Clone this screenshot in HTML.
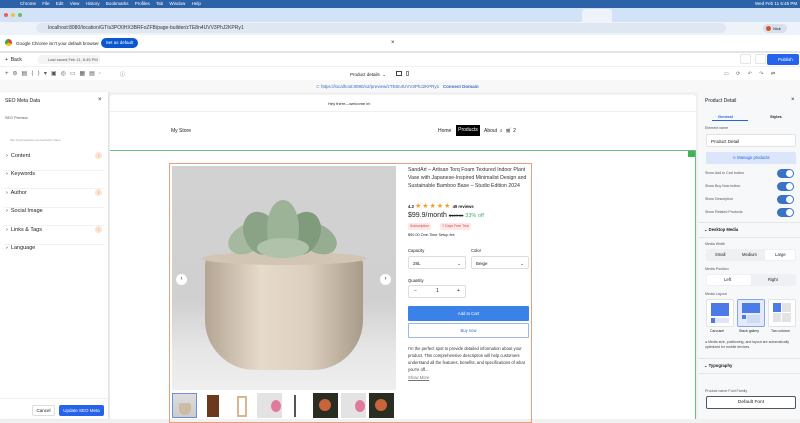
<!DOCTYPE html>
<html><head><meta charset="utf-8"><style>
*{box-sizing:border-box;margin:0;padding:0}
body{width:800px;height:419px;overflow:hidden;font-family:"Liberation Sans",sans-serif;background:#f1f1f1;position:relative;color:#222}
.a{position:absolute}
.t{font-size:5px;white-space:nowrap}
.sw{position:absolute;width:17px;height:9px;border-radius:5px;background:#3a73c4}
.sw:after{content:"";position:absolute;right:1px;top:1px;width:7px;height:7px;border-radius:50%;background:#fff}
.acc{position:absolute;left:4px;width:100px;height:27px;border-bottom:1px solid #f2f2f2;font-size:5.5px;padding:9px 0 0 2px}
.badge{position:absolute;right:2px;top:8px;width:7px;height:7px;border-radius:50%;background:#fbe3cf;color:#d88a3a;font-size:4px;text-align:center;line-height:7px}
.th{position:absolute;top:393px;width:25px;height:25px}
.lf{position:absolute;border-radius:50% 50% 45% 45%}
</style></head><body>
<div class="a" style="left:0;top:0;width:800px;height:8px;background:#2c63a8"></div>
<div class="a t" style="left:20px;top:1px;color:#fff;font-size:4.5px;word-spacing:5px">Chrome File Edit View History Bookmarks Profiles Tab Window Help</div>
<div class="a t" style="left:755px;top:1px;color:#fff;font-size:4.5px">Wed Feb 11 6:45 PM</div>
<div class="a" style="left:0;top:8px;width:800px;height:14px;background:#d3e3f7"></div>
<div class="a" style="left:4px;top:13px;width:4px;height:4px;border-radius:50%;background:#ee5d52"></div>
<div class="a" style="left:11px;top:13px;width:4px;height:4px;border-radius:50%;background:#f5bd4f"></div>
<div class="a" style="left:18px;top:13px;width:4px;height:4px;border-radius:50%;background:#5fc454"></div>
<div class="a" style="left:582px;top:9px;width:30px;height:13px;background:#eef3fa;border-radius:3px 3px 0 0"></div>
<div class="a" style="left:0;top:22px;width:800px;height:13px;background:#eef3fa"></div>
<div class="a" style="left:36px;top:23px;width:690px;height:10px;background:#dfe7f3;border-radius:5px"></div>
<div class="a t" style="left:48px;top:25px;font-size:5px;color:#333">localhost:8080/location/GTIs3PO0HX3BRFoZFB/page-builder/zTE8n4UVV3PhJ2KPRy1</div>
<div class="a" style="left:763px;top:24px;width:24px;height:9px;background:#d6e0ee;border-radius:5px"></div>
<div class="a" style="left:766px;top:26px;width:5px;height:5px;border-radius:50%;background:#d9531e"></div>
<div class="a t" style="left:773px;top:26px;font-size:4px">Nick</div>
<div class="a" style="left:0;top:35px;width:800px;height:16px;background:#fff"></div>
<div class="a" style="left:5px;top:39px;width:7px;height:7px;border-radius:50%;background:conic-gradient(#e94235 0 33%,#fbbc04 0 66%,#34a853 0)"></div>
<div class="a t" style="left:16px;top:41px;font-size:4.5px">Google Chrome isn't your default browser</div>
<div class="a" style="left:101px;top:38px;width:37px;height:10px;background:#0b57d0;border-radius:5px;color:#fff;font-size:4.5px;text-align:center;line-height:10px">Set as default</div>
<div class="a t" style="left:391px;top:40px;font-size:6px">×</div>
<div class="a" style="left:0;top:51px;width:800px;height:2px;background:#e4e4e4"></div>
<div class="a" style="left:0;top:53px;width:800px;height:27px;background:#fff"></div>
<div class="a t" style="left:5px;top:57px;font-size:5px">+&nbsp;&nbsp;Back</div>
<div class="a" style="left:38px;top:55px;width:62px;height:9px;background:#f4f4f4;border-radius:3px"></div>
<div class="a t" style="left:48px;top:57px;font-size:4px;color:#555">Last saved Feb 11, 6:45 PM</div>
<div class="a" style="left:740px;top:54px;width:11px;height:10px;border:1px solid #e5e5e5;border-radius:2px"></div>
<div class="a" style="left:755px;top:54px;width:11px;height:10px;border:1px solid #e5e5e5;border-radius:2px"></div>
<div class="a" style="left:767px;top:54px;width:32px;height:11px;background:#2563eb;border-radius:2px;color:#fff;font-size:4.5px;line-height:11px;padding-left:11px">Publish</div>
<div class="a" style="left:0;top:66px;width:800px;height:1px;background:#f0f0f0"></div>
<div class="a t" style="left:5px;top:70px;font-size:6px;color:#555;letter-spacing:4px">+⊜▤⟨⟩▾▣◎▭▦▤◦</div>
<div class="a t" style="left:120px;top:71px;font-size:5px;color:#555">ⓘ</div>
<div class="a t" style="left:350px;top:72px;font-size:4.5px">Product details &nbsp;⌄</div>
<div class="a" style="left:396px;top:71px;width:6px;height:5px;border:1px solid #444"></div>
<div class="a" style="left:406px;top:71px;width:3px;height:5px;border:1px solid #888"></div>
<div class="a t" style="left:724px;top:71px;font-size:5px;color:#666;word-spacing:6px">▭ ⟳ ↶ ↷ ⇄</div>
<div class="a" style="left:0;top:80px;width:800px;height:12px;background:#f8f8f8"></div>
<div class="a t" style="left:316px;top:84px;font-size:4.5px;color:#3a6bc9">⊂ https://localhost:8080/v2/preview/zTE8n4UVV3PhJ2KPRy1 &nbsp;&nbsp;<b>Connect Domain</b></div>
<div class="a" style="left:0;top:92px;width:108px;height:327px;background:#fff;box-shadow:1px 0 2px rgba(0,0,0,.08)"></div>
<div class="a t" style="left:5px;top:98px;font-size:5px">SEO Meta Data</div>
<div class="a t" style="left:98px;top:97px;font-size:6px">×</div>
<div class="a t" style="left:5px;top:116px;font-size:3.8px;color:#555">SEO Preview</div>
<div class="a t" style="left:10px;top:138px;font-size:3px;color:#999">http://yourwebsite.com/social-for-them</div>
<div class="acc" style="top:144px">›&nbsp; Content<span class="badge">!</span></div>
<div class="acc" style="top:162px">›&nbsp; Keywords</div>
<div class="acc" style="top:181px">›&nbsp; Author<span class="badge">!</span></div>
<div class="acc" style="top:199px">›&nbsp; Social Image</div>
<div class="acc" style="top:218px">›&nbsp; Links &amp; Tags<span class="badge">!</span></div>
<div class="acc" style="top:236px;border:none">›&nbsp; Language</div>
<div class="a" style="left:0;top:398px;width:108px;height:1px;background:#eee"></div>
<div class="a" style="left:32px;top:405px;width:23px;height:11px;border:1px solid #ddd;border-radius:2px;font-size:4.5px;text-align:center;line-height:9px">Cancel</div>
<div class="a" style="left:59px;top:405px;width:45px;height:11px;background:#2563eb;border-radius:2px;color:#fff;font-size:4.5px;text-align:center;line-height:11px">Update SEO Meta</div>
<div class="a" style="left:110px;top:95px;width:586px;height:324px;background:#fff;border-radius:3px"></div>
<div class="a" style="left:110px;top:111px;width:586px;height:1px;background:#eee"></div>
<div class="a t" style="left:328px;top:101px;font-size:4px">Hey there—welcome in!</div>
<div class="a t" style="left:171px;top:128px;font-size:5px">My Store</div>
<div class="a t" style="left:438px;top:128px;font-size:5px">Home</div>
<div class="a" style="left:456px;top:125px;width:24px;height:11px;background:#000;color:#fff;font-size:5px;line-height:11px;text-align:center">Products</div>
<div class="a t" style="left:484px;top:128px;font-size:5px">About &nbsp;⌕ &nbsp;🛒︎ 2</div>
<div class="a" style="left:110px;top:150px;width:586px;height:269px;border-top:1px solid #6cbf7b;border-right:1px solid #6cbf7b"></div>
<div class="a" style="left:688px;top:151px;width:7px;height:6px;background:#43b05c"></div>
<div class="a" style="left:169px;top:163px;width:363px;height:260px;border:1px solid #e8a07a"></div>
<div class="a" style="left:172px;top:166px;width:224px;height:224px;background:linear-gradient(180deg,#d2d2d2 0%,#d0d0d0 60%,#e6e6e6 82%,#efefef 100%);overflow:hidden">
 <div class="a" style="left:33px;top:92px;width:158px;height:112px;background:linear-gradient(90deg,#b4a593,#e6dacb 35%,#dccfbf 65%,#a99b89);border-radius:6px 6px 50px 50px"></div>
 <div class="a" style="left:30px;top:86px;width:164px;height:13px;background:#d3c5b3;border-radius:50%"></div>
 <div class="lf" style="left:55px;top:58px;width:44px;height:28px;background:#a5b8a0;transform:rotate(-25deg)"></div>
 <div class="lf" style="left:122px;top:58px;width:44px;height:28px;background:#97ad92;transform:rotate(25deg)"></div>
 <div class="lf" style="left:72px;top:45px;width:34px;height:44px;background:#8aa286;transform:rotate(-25deg)"></div>
 <div class="lf" style="left:114px;top:45px;width:34px;height:44px;background:#809a7c;transform:rotate(25deg)"></div>
 <div class="lf" style="left:95px;top:34px;width:32px;height:56px;background:#9db398"></div>
 <div class="lf" style="left:85px;top:72px;width:52px;height:20px;background:#b0c2aa;border-radius:50%"></div>
</div>
<div class="a" style="left:176px;top:274px;width:11px;height:11px;border-radius:50%;background:#fff;font-size:6px;text-align:center;line-height:11px">‹</div>
<div class="a" style="left:380px;top:274px;width:11px;height:11px;border-radius:50%;background:#fff;font-size:6px;text-align:center;line-height:11px">›</div>
<div class="th" style="left:172px;border:1px solid #6f8fd8;background:linear-gradient(#ddd,#ccc)"><div class="a" style="left:6px;top:9px;width:12px;height:12px;background:#cdbba5;border-radius:2px 2px 6px 6px"></div></div>
<div class="th" style="left:206px;background:#fff"><div class="a" style="left:1px;top:2px;width:12px;height:22px;background:#6b3a1e"></div></div>
<div class="th" style="left:231px;background:#fff"><div class="a" style="left:6px;top:3px;width:10px;height:21px;border:2px solid #d9b78c"></div></div>
<div class="th" style="left:257px;background:#e3e3e3"><div class="a" style="left:14px;top:7px;width:10px;height:12px;background:#e07a9a;border-radius:50%"></div></div>
<div class="th" style="left:289px;background:#fff"><div class="a" style="left:5px;top:2px;width:2px;height:22px;background:#555"></div></div>
<div class="th" style="left:313px;background:#2a2d22"><div class="a" style="left:6px;top:6px;width:12px;height:12px;background:#c8643a;border-radius:50%"></div></div>
<div class="th" style="left:341px;background:#e3e3e3"><div class="a" style="left:14px;top:7px;width:10px;height:12px;background:#e07a9a;border-radius:50%"></div></div>
<div class="th" style="left:369px;background:#2a2d22"><div class="a" style="left:6px;top:6px;width:12px;height:12px;background:#c8643a;border-radius:50%"></div></div>
<div class="a" style="left:408px;top:166px;width:124px;font-size:5.2px;line-height:8px;color:#333">SandArt – Artisan Torq Foam Textured Indoor Plant Vase with Japanese-Inspired Minimalist Design and Sustainable Bamboo Base – Studio Edition 2024</div>
<div class="a t" style="left:408px;top:202px;font-size:4.2px"><b>4.3</b> <span style="color:#f0a030;font-size:7px;letter-spacing:1px">★★★★★</span> <b>49 reviews</b></div>
<div class="a t" style="left:408px;top:212px;font-size:7px">$99.9/month <span style="font-size:4px;text-decoration:line-through">$149.00</span> <span style="font-size:5.5px;color:#3cb371">33% off</span></div>
<div class="a" style="left:408px;top:223px;width:23px;height:7px;background:#fde8e8;color:#d44;font-size:3.5px;text-align:center;line-height:7px;border-radius:2px">Subscription</div>
<div class="a" style="left:440px;top:223px;width:31px;height:7px;background:#fde8e8;color:#d44;font-size:3.5px;text-align:center;line-height:7px;border-radius:2px">7 Days Free Trial</div>
<div class="a t" style="left:408px;top:233px;font-size:3.8px">$90.00 One-Time Setup fee</div>
<div class="a t" style="left:408px;top:248px;font-size:4.2px">Capacity</div>
<div class="a t" style="left:471px;top:248px;font-size:4.2px">Color</div>
<div class="a" style="left:408px;top:256px;width:58px;height:13px;border:1px solid #ddd;border-radius:2px;font-size:4.5px;padding:4px 0 0 4px">28L<span style="float:right;margin-right:4px">⌄</span></div>
<div class="a" style="left:471px;top:256px;width:58px;height:13px;border:1px solid #ddd;border-radius:2px;font-size:4.5px;padding:4px 0 0 4px">Beige<span style="float:right;margin-right:4px">⌄</span></div>
<div class="a t" style="left:408px;top:278px;font-size:4.2px">Quantity</div>
<div class="a" style="left:408px;top:285px;width:58px;height:13px;border:1px solid #ddd;border-radius:2px;font-size:5px;line-height:11px"><span style="margin-left:5px">−</span><span style="position:absolute;left:27px">1</span><span style="position:absolute;left:48px">+</span></div>
<div class="a" style="left:408px;top:306px;width:121px;height:15px;background:#3b82e8;border-radius:1px;color:#fff;font-size:4.2px;text-align:center;line-height:15px">Add to Cart</div>
<div class="a" style="left:408px;top:323px;width:121px;height:15px;border:1px solid #9db8e8;border-radius:1px;color:#3a6bc9;font-size:4.2px;text-align:center;line-height:13px">Buy now</div>
<div class="a" style="left:408px;top:345px;width:122px;font-size:4.2px;line-height:7px;color:#333">I'm the perfect spot to provide detailed information about your product. This comprehensive description will help customers understand all the features, benefits, and specifications of what you're off...</div>
<div class="a t" style="left:408px;top:375px;font-size:4.2px;color:#777;text-decoration:underline">Show More</div>
<div class="a" style="left:698px;top:92px;width:102px;height:327px;background:#f7f8fa"></div>
<div class="a t" style="left:705px;top:98px;font-size:5px">Product Detail</div>
<div class="a t" style="left:791px;top:97px;font-size:6px">×</div>
<div class="a t" style="left:718px;top:114px;font-size:4px;color:#2563eb;font-weight:bold">General</div>
<div class="a" style="left:712px;top:120px;width:36px;height:1px;background:#2563eb"></div>
<div class="a t" style="left:770px;top:114px;font-size:4px;font-weight:bold">Styles</div>
<div class="a t" style="left:705px;top:126px;font-size:3.6px;color:#555">Element name</div>
<div class="a" style="left:706px;top:134px;width:90px;height:13px;background:#fff;border:1px solid #e3e3e3;border-radius:2px;font-size:4.5px;padding:4px 0 0 4px">Product Detail</div>
<div class="a" style="left:706px;top:152px;width:90px;height:12px;background:#dbe6fb;border-radius:2px;color:#2563eb;font-size:4.2px;text-align:center;line-height:12px">⊙ Manage products</div>
<div class="a t" style="left:705px;top:171px;font-size:3.6px;color:#555">Show Add to Cart button</div><div class="sw" style="left:777px;top:169px"></div>
<div class="a t" style="left:705px;top:184px;font-size:3.6px;color:#555">Show Buy Now button</div><div class="sw" style="left:777px;top:182px"></div>
<div class="a t" style="left:705px;top:197px;font-size:3.6px;color:#555">Show Description</div><div class="sw" style="left:777px;top:195px"></div>
<div class="a t" style="left:705px;top:210px;font-size:3.6px;color:#555">Show Related Products</div><div class="sw" style="left:777px;top:208px"></div>
<div class="a" style="left:698px;top:222px;width:102px;height:1px;background:#e6e6e6"></div>
<div class="a t" style="left:704px;top:227px;font-size:4.2px;font-weight:bold">⌄ Desktop Media</div>
<div class="a" style="left:698px;top:237px;width:102px;height:1px;background:#e6e6e6"></div>
<div class="a t" style="left:705px;top:242px;font-size:3.6px;color:#555">Media Width</div>
<div class="a" style="left:706px;top:249px;width:90px;height:12px;background:#eef0f3;border-radius:2px"></div>
<div class="a" style="left:765px;top:250px;width:30px;height:10px;background:#fff;border-radius:2px"></div>
<div class="a t" style="left:715px;top:252px;font-size:4.2px">Small</div>
<div class="a t" style="left:742px;top:252px;font-size:4.2px">Medium</div>
<div class="a t" style="left:775px;top:252px;font-size:4.2px">Large</div>
<div class="a t" style="left:705px;top:267px;font-size:3.6px;color:#555">Media Position</div>
<div class="a" style="left:706px;top:274px;width:90px;height:12px;background:#eef0f3;border-radius:2px"></div>
<div class="a" style="left:707px;top:275px;width:44px;height:10px;background:#fff;border-radius:2px"></div>
<div class="a t" style="left:724px;top:277px;font-size:4.2px">Left</div>
<div class="a t" style="left:768px;top:277px;font-size:4.2px">Right</div>
<div class="a t" style="left:705px;top:292px;font-size:3.6px;color:#555">Media Layout</div>
<div class="a" style="left:706px;top:299px;width:28px;height:28px;background:#fff;border:1px solid #e3e3e3;border-radius:2px"><div class="a" style="left:4px;top:3px;width:18px;height:13px;background:#4a7be6"></div><div class="a" style="left:4px;top:18px;width:18px;height:5px;background:#dde5f7"></div><div class="a" style="left:4px;top:18px;width:4px;height:5px;background:#4a7be6"></div></div>
<div class="a" style="left:737px;top:299px;width:28px;height:28px;background:#e4eaf9;border:1px solid #8aa5e6;border-radius:2px"><div class="a" style="left:4px;top:3px;width:18px;height:10px;background:#4a7be6"></div><div class="a" style="left:4px;top:15px;width:4px;height:4px;background:#4a7be6"></div><div class="a" style="left:9px;top:15px;width:13px;height:8px;background:#cfdaf3"></div></div>
<div class="a" style="left:768px;top:299px;width:28px;height:28px;background:#fff;border:1px solid #e3e3e3;border-radius:2px"><div class="a" style="left:4px;top:3px;width:8px;height:9px;background:#4a7be6"></div><div class="a" style="left:13px;top:3px;width:9px;height:9px;background:#e3e3e3"></div><div class="a" style="left:4px;top:13px;width:8px;height:9px;background:#e3e3e3"></div><div class="a" style="left:13px;top:13px;width:9px;height:9px;background:#e3e3e3"></div></div>
<div class="a t" style="left:710px;top:329px;font-size:3.5px">Carousel</div>
<div class="a t" style="left:739px;top:329px;font-size:3.5px">Stack gallery</div>
<div class="a t" style="left:771px;top:329px;font-size:3.5px">Two column</div>
<div class="a" style="left:705px;top:340px;width:93px;font-size:3.5px;line-height:5px;color:#444">● Media size, positioning, and layout are automatically optimized for mobile devices.</div>
<div class="a" style="left:698px;top:358px;width:102px;height:1px;background:#e6e6e6"></div>
<div class="a t" style="left:704px;top:363px;font-size:4.2px;font-weight:bold">⌄ Typography</div>
<div class="a" style="left:698px;top:373px;width:102px;height:1px;background:#e6e6e6"></div>
<div class="a t" style="left:705px;top:389px;font-size:3.6px;color:#555">Product name Font Family</div>
<div class="a" style="left:706px;top:396px;width:90px;height:13px;background:#fff;border:1px solid #555;border-radius:2px;font-size:4.8px;text-align:center;line-height:11px">Default Font</div>
</body></html>
